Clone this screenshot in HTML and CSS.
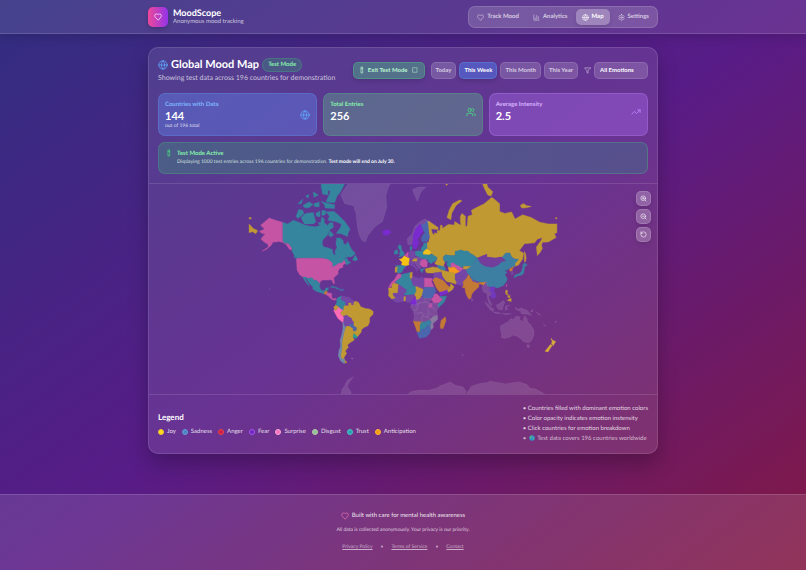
FILE: index.html
```html
<!DOCTYPE html>
<html lang="en">
<head>
<meta charset="utf-8">
<meta name="viewport" content="width=device-width, initial-scale=1">
<title>MoodScope</title>
<link rel="stylesheet" href="styles.css">
</head>
<body>
<svg class="sprite" aria-hidden="true">
  <symbol id="heart" viewBox="0 0 24 24"><path d="M19 14c1.49-1.46 3-3.21 3-5.5A5.5 5.5 0 0 0 16.5 3c-1.76 0-3 .5-4.5 2-1.5-1.5-2.74-2-4.5-2A5.5 5.5 0 0 0 2 8.500c0 2.300 1.500 4.050 3 5.500l7 7Z"/></symbol>
  <symbol id="chart" viewBox="0 0 24 24"><path d="M3 3v18h18M18 17V9M13 17V5M8 17v-3"/></symbol>
  <symbol id="globe" viewBox="0 0 24 24"><circle cx="12" cy="12" r="10"/><path d="M12 2a14.500 14.500 0 0 0 0 20 14.500 14.500 0 0 0 0-20M2 12h20"/></symbol>
  <symbol id="gear" viewBox="0 0 24 24"><path d="M12.220 2h-.44a2 2 0 0 0-2 2v.18a2 2 0 0 1-1 1.730l-.43.25a2 2 0 0 1-2 0l-.15-.08a2 2 0 0 0-2.730.73l-.22.38a2 2 0 0 0 .73 2.730l.15.1a2 2 0 0 1 1 1.720v.51a2 2 0 0 1-1 1.740l-.15.09a2 2 0 0 0-.73 2.730l.22.38a2 2 0 0 0 2.730.73l.15-.08a2 2 0 0 1 2 0l.43.25a2 2 0 0 1 1 1.730V20a2 2 0 0 0 2 2h.44a2 2 0 0 0 2-2v-.18a2 2 0 0 1 1-1.730l.43-.25a2 2 0 0 1 2 0l.15.08a2 2 0 0 0 2.730-.73l.22-.39a2 2 0 0 0-.73-2.730l-.15-.08a2 2 0 0 1-1-1.740v-.5a2 2 0 0 1 1-1.740l.15-.09a2 2 0 0 0 .73-2.730l-.22-.38a2 2 0 0 0-2.730-.73l-.15.08a2 2 0 0 1-2 0l-.43-.25a2 2 0 0 1-1-1.730V4a2 2 0 0 0-2-2z"/><circle cx="12" cy="12" r="3"/></symbol>
  <symbol id="users" viewBox="0 0 24 24"><path d="M16 21v-2a4 4 0 0 0-4-4H6a4 4 0 0 0-4 4v2M22 21v-2a4 4 0 0 0-3-3.870M16 3.130a4 4 0 0 1 0 7.750"/><circle cx="9" cy="7" r="4"/></symbol>
  <symbol id="trend" viewBox="0 0 24 24"><path d="M22 7l-8.500 8.500-5-5L2 17M16 7h6v6"/></symbol>
  <symbol id="filter" viewBox="0 0 24 24"><path d="M22 3H2l8 9.460V19l4 2v-8.540z"/></symbol>
  <symbol id="zoom-in" viewBox="0 0 24 24"><circle cx="11" cy="11" r="8"/><path d="M21 21l-4.350-4.350M11 8v6M8 11h6"/></symbol>
  <symbol id="zoom-out" viewBox="0 0 24 24"><circle cx="11" cy="11" r="8"/><path d="M21 21l-4.350-4.350M8 11h6"/></symbol>
  <symbol id="reset" viewBox="0 0 24 24"><path d="M3 12a9 9 0 1 0 9-9 9.750 9.750 0 0 0-6.740 2.740L3 8M3 3v5h5"/></symbol>
  <symbol id="tube" viewBox="0 0 12 24"><path d="M4 3h4v18H4zM4 8h4"/></symbol>
  <symbol id="box" viewBox="0 0 24 24"><path d="M4 3h16v18H4z"/></symbol>
</svg>

<header class="topbar">
  <div class="container topbar-row">
    <div class="brand">
      <span class="brand-mark"><svg class="icon md"><use href="#heart"/></svg></span>
      <div>
        <div class="brand-name">MoodScope</div>
        <div class="brand-sub">Anonymous mood tracking</div>
      </div>
    </div>
    <nav class="nav">
      <a href="#track"><svg class="icon sm"><use href="#heart"/></svg>Track Mood</a>
      <a href="#analytics"><svg class="icon sm"><use href="#chart"/></svg>Analytics</a>
      <a href="#map" class="active"><svg class="icon sm"><use href="#globe"/></svg>Map</a>
      <a href="#settings"><svg class="icon sm"><use href="#gear"/></svg>Settings</a>
    </nav>
  </div>
</header>

<main class="container main">
  <section class="card">
    <div class="card-head">
      <div class="title-row">
        <div>
          <div class="title">
            <svg class="icon lg blue"><use href="#globe"/></svg>
            <h1>Global Mood Map</h1>
            <span class="badge">Test Mode</span>
          </div>
          <p class="subtitle">Showing test data across 196 countries for demonstration</p>
        </div>
        <div class="controls">
          <button class="btn exit"><svg class="icon tube"><use href="#tube"/></svg>Exit Test Mode<svg class="icon xs"><use href="#box"/></svg></button>
          <div class="periods">
            <button class="btn">Today</button>
            <button class="btn selected">This Week</button>
            <button class="btn">This Month</button>
            <button class="btn">This Year</button>
          </div>
          <div class="filter">
            <label for="emotion" aria-label="Emotion"><svg class="icon sm"><use href="#filter"/></svg></label>
            <select id="emotion"><option>All Emotions</option></select>
          </div>
        </div>
      </div>

      <div class="stats">
        <div class="stat stat-blue">
          <div><div class="stat-label">Countries with Data</div><div class="stat-value">144</div><div class="stat-note">out of 196 total</div></div>
          <svg class="icon lg"><use href="#globe"/></svg>
        </div>
        <div class="stat stat-green">
          <div><div class="stat-label">Total Entries</div><div class="stat-value">256</div></div>
          <svg class="icon lg"><use href="#users"/></svg>
        </div>
        <div class="stat stat-purple">
          <div><div class="stat-label">Average Intensity</div><div class="stat-value">2.5</div></div>
          <svg class="icon lg"><use href="#trend"/></svg>
        </div>
      </div>

      <div class="notice">
        <svg class="icon tube"><use href="#tube"/></svg>
        <div>
          <div class="notice-title">Test Mode Active</div>
          <div class="notice-text">Displaying 1000 test entries across 196 countries for demonstration. <strong>Test mode will end on July 30.</strong></div>
        </div>
      </div>
    </div>

    <div class="map">
      <svg id="world" viewBox="0 0 508 210" role="img" aria-label="World map of moods"></svg>
      <div class="map-tools">
        <button aria-label="Zoom in"><svg class="icon sm"><use href="#zoom-in"/></svg></button>
        <button aria-label="Zoom out"><svg class="icon sm"><use href="#zoom-out"/></svg></button>
        <button aria-label="Reset"><svg class="icon sm"><use href="#reset"/></svg></button>
      </div>
    </div>

    <div class="legend">
      <div>
        <h2>Legend</h2>
        <ul class="keys">
          <li><i class="dot joy"></i>Joy</li>
          <li><i class="dot sadness"></i>Sadness</li>
          <li><i class="dot anger"></i>Anger</li>
          <li><i class="dot fear"></i>Fear</li>
          <li><i class="dot surprise"></i>Surprise</li>
          <li><i class="dot disgust"></i>Disgust</li>
          <li><i class="dot trust"></i>Trust</li>
          <li><i class="dot anticipation"></i>Anticipation</li>
        </ul>
      </div>
      <ul class="hints">
        <li>• Countries filled with dominant emotion colors</li>
        <li>• Color opacity indicates emotion instensity</li>
        <li>• Click countries for emotion breakdown</li>
        <li class="dim">•<svg class="earth" viewBox="0 0 12 12"><circle cx="6" cy="6" r="5.500" fill="#2f8fd0"/><path d="M2 3l3-2 2 1-1 3-2 1-1 3-2-3zM8 5l3 0-1 4-2 1z" fill="#4fb08a"/></svg>Test data covers 196 countries worldwide</li>
      </ul>
    </div>
  </section>
</main>

<footer class="footer">
  <p class="built"><svg class="icon md pink"><use href="#heart"/></svg>Built with care for mental health awareness</p>
  <p class="privacy">All data is collected anonymously. Your privacy is our priority.</p>
  <div class="links"><a href="#privacy">Privacy Policy</a><span>•</span><a href="#terms">Terms of Service</a><span>•</span><a href="#contact">Contact</a></div>
</footer>
<script src="map.js"></script>
</body>
</html>
```
FILE: styles.css
```css
* { box-sizing: border-box; }

body {
  margin: 0;
  min-height: 100vh;
  display: flex;
  flex-direction: column;
  font-family: Lato, "Open Sans", sans-serif;
  font-size: 6px;
  line-height: 8px;
  text-rendering: geometricPrecision;
  color: #fff;
  background: linear-gradient(to bottom right, #312e81, #581c87, #831843);
}

h1, h2, p, ul { margin: 0; padding: 0; }
ul { list-style: none; }
a { color: inherit; text-decoration: none; }
button, select { font: inherit; color: inherit; margin: 0; }

.sprite { display: none; }

.icon {
  flex: none;
  fill: none;
  stroke: currentColor;
  stroke-width: 2;
  stroke-linecap: round;
  stroke-linejoin: round;
}
.icon.xs { width: 6px; height: 6px; }
.icon.sm { width: 7px; height: 7px; }
.icon.md { width: 8px; height: 8px; }
.icon.lg { width: 10px; height: 10px; }
.icon.tube { width: 4px; height: 8px; }
.blue { color: #60a5fa; }
.pink { color: #f472b6; }

.container {
  width: 100%;
  max-width: 510px;
  margin: 0 auto;
}

.topbar {
  background: rgba(255, 255, 255, 0.1);
  border-bottom: 1px solid rgba(255, 255, 255, 0.14);
  box-shadow: 0 3px 10px rgba(0, 0, 0, 0.15);
}
.topbar-row {
  display: flex;
  align-items: center;
  justify-content: space-between;
  padding: 6px 0 5px;
}
.brand { display: flex; align-items: center; gap: 5px; }
.brand-mark {
  display: grid;
  place-items: center;
  width: 20px;
  height: 20px;
  border-radius: 5px;
  background: linear-gradient(to right, #ec4899, #9333ea);
  box-shadow: 0 2px 5px rgba(0, 0, 0, 0.2);
}
.brand-name { font-size: 9px; line-height: 10px; font-weight: 700; }
.brand-sub { color: rgba(255, 255, 255, 0.7); }

.nav {
  display: flex;
  padding: 2px;
  gap: 2px;
  border: 1px solid rgba(255, 255, 255, 0.14);
  border-radius: 7px;
  background: rgba(255, 255, 255, 0.16);
}
.nav a {
  display: flex;
  align-items: center;
  gap: 3px;
  padding: 4px 6px;
  border-radius: 5px;
  font-weight: 700;
  color: rgba(255, 255, 255, 0.7);
}
.nav .active {
  color: #fff;
  background: rgba(255, 255, 255, 0.28);
  box-shadow: 0 2px 4px rgba(0, 0, 0, 0.1);
}

.main { flex: 1; padding: 13px 0 40px; }

.card {
  overflow: hidden;
  border: 1px solid rgba(255, 255, 255, 0.12);
  border-radius: 10px;
  background: rgba(255, 255, 255, 0.1);
  box-shadow: 0 10px 20px rgba(0, 0, 0, 0.25);
}
.card-head {
  padding: 9px;
  border-bottom: 1px solid rgba(255, 255, 255, 0.12);
}
.title-row {
  display: flex;
  align-items: center;
  justify-content: space-between;
  margin-bottom: 10px;
}
.title { display: flex; align-items: center; gap: 3px; }
h1 { font-size: 11px; line-height: 16px; font-weight: 700; }
.badge {
  padding: 2px 5px;
  border: 1px solid rgba(74, 222, 128, 0.2);
  border-radius: 7px;
  background: rgba(34, 197, 94, 0.22);
  color: #86efac;
  font-weight: 700;
}
.subtitle { font-size: 7px; line-height: 10px; color: rgba(255, 255, 255, 0.7); }

.controls { display: flex; align-items: center; gap: 6px; }
.periods { display: flex; gap: 3px; }
.btn {
  display: flex;
  align-items: center;
  padding: 3px 4px;
  height: 17px;
  border: 1px solid rgba(255, 255, 255, 0.12);
  border-radius: 5px;
  background: rgba(255, 255, 255, 0.16);
  color: rgba(255, 255, 255, 0.7);
  font-weight: 700;
  white-space: nowrap;
}
.btn.selected {
  color: #fff;
  border-color: rgba(96, 165, 250, 0.3);
  background: rgba(80, 110, 220, 0.6);
  box-shadow: 0 2px 4px rgba(0, 0, 0, 0.15);
}
.btn.exit {
  gap: 4px;
  padding: 3px 6px;
  color: #bbf7d0;
  border-color: rgba(74, 222, 128, 0.3);
  background: rgba(74, 190, 130, 0.42);
  box-shadow: 0 2px 4px rgba(0, 0, 0, 0.15);
}
.filter { display: flex; align-items: center; gap: 3px; color: rgba(255, 255, 255, 0.7); }
.filter label { display: flex; }
.filter select {
  appearance: none;
  width: 54px;
  height: 17px;
  padding: 0 5px;
  border: 1px solid rgba(255, 255, 255, 0.12);
  border-radius: 5px;
  background: rgba(255, 255, 255, 0.16);
  color: #fff;
  font-weight: 700;
}

.stats {
  display: grid;
  grid-template-columns: repeat(3, 1fr);
  gap: 6px;
  margin-bottom: 6px;
}
.stat {
  display: flex;
  align-items: center;
  justify-content: space-between;
  min-height: 43px;
  padding: 5px 6px;
  border: 1px solid;
  border-radius: 7px;
}
.stat > div { align-self: flex-start; }
.stat-label { font-weight: 700; line-height: 11px; }
.stat-value { font-size: 11px; line-height: 13px; font-weight: 700; color: #fff; }
.stat-note { font-size: 5px; line-height: 7px; color: rgba(255, 255, 255, 0.8); }
.stat .icon { margin-bottom: 6px; }
.stat-blue { color: #7fb5fc; background: rgba(96, 140, 250, 0.36); border-color: rgba(96, 165, 250, 0.25); }
.stat-blue .icon { color: #60a5fa; margin-bottom: 0; }
.stat-green { color: #86efac; background: rgba(96, 170, 140, 0.42); border-color: rgba(74, 222, 128, 0.2); }
.stat-green .icon { color: #4ade80; }
.stat-purple { color: #d8b4fe; background: rgba(168, 105, 235, 0.4); border-color: rgba(192, 132, 252, 0.3); }
.stat-purple .icon { color: #c084fc; }

.notice {
  display: flex;
  align-items: flex-start;
  gap: 6px;
  padding: 6px 8px;
  border: 1px solid rgba(74, 222, 128, 0.22);
  border-radius: 7px;
  background: linear-gradient(to right, rgba(64, 135, 125, 0.45), rgba(64, 115, 140, 0.45));
}
.notice .icon { color: #4ade80; }
.notice-title { font-weight: 700; line-height: 9px; color: #86efac; }
.notice-text { font-size: 5px; line-height: 9px; color: rgba(230, 255, 240, 0.85); }
.notice strong { color: #fff; }

.map { position: relative; }
.map > svg { display: block; width: 100%; }
.map-tools {
  position: absolute;
  top: 7px;
  right: 6px;
  display: grid;
  gap: 3px;
}
.map-tools button {
  display: grid;
  place-items: center;
  width: 15px;
  height: 15px;
  padding: 0;
  border: 1px solid rgba(255, 255, 255, 0.15);
  border-radius: 5px;
  background: rgba(255, 255, 255, 0.24);
  box-shadow: 0 2px 4px rgba(0, 0, 0, 0.12);
}

.legend {
  display: flex;
  align-items: center;
  justify-content: space-between;
  padding: 9px;
  border-top: 1px solid rgba(255, 255, 255, 0.12);
}
h2 { font-size: 8px; line-height: 10px; font-weight: 700; margin-bottom: 6px; }
.keys { display: flex; gap: 6px; color: rgba(255, 255, 255, 0.85); }
.keys li { display: flex; align-items: center; gap: 3px; }
.dot { width: 6px; height: 6px; border: 1px solid; border-radius: 50%; }
.joy { background: #ffd91f; border-color: #e8c52c; }
.sadness { background: #4b84c4; border-color: #6b9bd2; }
.anger { background: #c81e4b; border-color: #ef4444; }
.fear { background: #6d28b8; border-color: #a855f7; }
.surprise { background: #f472c0; border-color: #f9a8d4; }
.disgust { background: #98bd98; border-color: #b5d0a5; }
.trust { background: #2ba3b4; border-color: #4cc2c4; }
.anticipation { background: #f59e0b; border-color: #ffb53a; }
.hints { color: rgba(255, 255, 255, 0.8); line-height: 10px; }
.hints .dim { color: rgba(255, 255, 255, 0.65); }
.earth { width: 6px; height: 6px; margin: 0 2px 0 3px; vertical-align: -1px; }

.footer {
  padding: 16px 0 18px;
  border-top: 1px solid rgba(255, 255, 255, 0.14);
  background: rgba(255, 255, 255, 0.12);
  text-align: center;
}
.built {
  display: flex;
  justify-content: center;
  align-items: center;
  gap: 3px;
  line-height: 10px;
  color: rgba(255, 255, 255, 0.9);
}
.privacy { margin: 6px 0 9px; font-size: 5px; line-height: 7px; color: rgba(255, 255, 255, 0.75); }
.links { display: flex; justify-content: center; gap: 8px; font-size: 5px; line-height: 9px; color: rgba(255, 255, 255, 0.6); }
.links a { text-decoration: underline; }
```
FILE: map.js
```js
// Country outlines as "lon,lat" rings, drawn with a Mercator projection.
const R = 49, CX = 254, EQUATOR = 122.5;
const NONE = "rgba(255,255,255,0.12)";
const GOLD = "#c19933", TEAL = "#36859f", PINK = "#c654a4", BLUE = "#4a67ae";
const VIOLET = "#7a2bd0", ORANGE = "#c37a35", MUTED = "#7546a6", STEEL = "#3d7fa2";

const countries = [
  // Russia
  [GOLD, "28,70 31,70 33,69.5 41,67.5 41,66.5 35,66.7 33,66.7 34.5,64.5 37,64 37,65 40,64.6 40,66 43,66 44,68.5 46,68.3 46,67 53,68.8 60,68.5 60.5,70 65,69 68,68.5 67,70 67,72 69,73 73,72 73,68 75,68 76,72 81,72.5 80,74 87,75 95,76 104,77.7 108,77 113,76 113,73.6 119,73 127,73.5 131,71 140,72.5 150,71.5 160,69.7 170,69 180,69 180,65 177,64.5 179,62.5 170,60 163,59.8 162,58 163,56 160,53 157,51 156,57 161,60.5 163,62.5 157,61.5 154,59.5 142,59 136,54.5 141,53 140,48.5 135,43.5 131,42.6 131,45 135,48.3 130.5,48.5 127,50 125,53 120,53 118,49.7 115,50 108,49.3 98,50 98,52 92,50.7 87,49.2 83,51 77,53.3 76,54.2 71,54.2 68,55 61,54 61,51 55,51 50,51.6 47,50 47,48 49,46 47.5,43 48.5,42 40,43.5 37,45 39,47 40,49.5 35.5,50.4 34,52 31,53 31,55.5 28,56 28,59.5 30,60 31,62.5 30,65 29,68"],
  [GOLD, "51.5,71.5 56,70.7 57,73 62,75.5 69,76.8 66,77 58,76 54,74"],
  [GOLD, "91,81.5 97,81.3 99,80 105,79 103,78 99,78.3 95,79.8"],
  [GOLD, "48,81 54,81 51,80.3"],
  [GOLD, "137,75.5 141,76.1 144,75.5 150,75.2 144,74.8 139,74.7"],
  [GOLD, "178.5,71.5 180,71.5 180,71 178.5,71"],
  [GOLD, "142,54 143.5,52 144,49 143,46 142,46.5 142,50"],
  [GOLD, "-180,69 -175,67 -170,66 -172,64.5 -176,65.5 -180,65"],
  [GOLD, "-180,71.5 -177.5,71.5 -177.5,71 -180,71"],
  // Canada
  [TEAL, "-141,69.7 -135,69 -128,70.5 -122,69.7 -115,68.5 -108,68 -102,67.8 -97,68.3 -95,71.8 -92,71 -92,69.5 -88,68.3 -86,69.5 -82,69.5 -81.5,67.5 -86,66.3 -88,64 -94,61 -94.5,58.7 -92.5,57 -88,56.5 -82.5,55.2 -82,53 -80,51.3 -79,52 -79.5,54.5 -77,56.5 -78.5,58.7 -77.5,62.3 -73.5,62.3 -70,61 -69.5,59 -67,58.3 -64.5,60.3 -61.5,57 -60,55.3 -57.5,54 -55.8,52.3 -60,50.2 -66,50 -69,48.5 -65,49 -64.5,47 -61,45.8 -64,44.5 -66,43.5 -67,45 -69,47.4 -71,45.2 -75,45 -79,43 -82.8,42 -82.5,45.3 -84.5,46.5 -88.5,48.2 -95,49 -123,49 -127,51 -130,54.5 -130,56 -134,59 -137.5,59 -141,60.3"],
  [TEAL, "-59,47.8 -55.7,51.5 -53,48 -55.5,46.9"],
  [TEAL, "-90,73.5 -81,73.7 -76,72.5 -68,70 -62,66.8 -64,65 -65,63 -72,64.5 -78,64.7 -73,67.5 -72,69 -79,70 -88,70.5 -86,72"],
  [TEAL, "-117,70 -119,71.5 -114,73 -105,73.3 -102,69.8 -105,69 -115,69"],
  [TEAL, "-125,72 -122,74.3 -117,74 -116,72.8 -123,71.2"],
  [TEAL, "-90,76.5 -80,76.3 -77,78 -73,79 -62,82.5 -90,83 -91,80 -85,79"],
  [TEAL, "-96,76.7 -91,76.3 -80,75.7 -80,74.6 -91,74.7 -92,75.8"],
  [TEAL, "-96,80.5 -90,80.8 -87,80 -88,78.3 -94,78.5"],
  [TEAL, "-117,75.5 -110,76.5 -105,75.8 -110,74.8 -115,74.8"],
  [TEAL, "-95,74 -90,73.8 -91,72.5 -95,72.3"],
  [TEAL, "-102,73 -97,73.8 -97,71.8 -101,72"],
  [TEAL, "-104,76 -98,76.5 -98,75 -104,75.2"],
  [TEAL, "-123,76 -117,77.3 -119,76"],
  [TEAL, "-105,79 -99,78.3 -104,77.7"],
  [TEAL, "-114,78 -110,78.4 -111,77.5"],
  [TEAL, "-86,66 -81,64 -84,62.8 -87,63.6"],
  [TEAL, "-99,69.7 -96,69.3 -98,68.6"],
  [TEAL, "-128,50.7 -125,50 -123.5,48.5 -125.5,48.9"],
  // United States
  [PINK, "-141,69.7 -150,70.6 -156.5,71.3 -163,69.5 -166.5,68.4 -162,66.7 -168,65.6 -164,64.5 -161,64.3 -165,62.5 -166,61.5 -162,59.8 -158,58.7 -157.5,57 -162,55.2 -165,54.3 -160,55.3 -154,58 -152,60 -149,60 -145,60.3 -139.5,59.6 -136,58 -133,55.5 -130.5,55 -130,56 -134,59 -137.5,59 -141,60.5"],
  [PINK, "-124.7,48.4 -123,49 -95,49 -88.5,48.2 -84.5,46.5 -82.5,45.3 -82.8,42 -79,43 -75,45 -71,45.2 -69,47.4 -67,45 -70.5,43.3 -70,41.7 -74,40.5 -76,38 -75.8,35.5 -78.5,33.8 -81,31.7 -80.2,27 -80.5,25.2 -82,27 -83,29.5 -85,29.8 -90,29.5 -94,29.7 -97.2,27.5 -97.2,26 -99.5,27.5 -101.5,29.7 -103,29 -104.8,29.8 -106.5,31.8 -111,31.3 -114.8,32.5 -117,32.5 -120.5,34.5 -123.8,39 -124.2,43"],
  [MUTED, "-157,21.5 -154.8,19.5 -156,19.2"],
  // Central America and the Caribbean
  [TEAL, "-117,32.5 -114.8,32.5 -111,31.3 -106.5,31.8 -104.8,29.8 -103,29 -101.5,29.7 -99.5,27.5 -97.2,26 -97.8,22.5 -96,19.2 -94,18.2 -91,18.7 -90.4,21 -87,21.5 -88,18.4 -91,17.8 -92,14.6 -96,15.8 -101,17.3 -105.5,20 -105.5,22.5 -109.5,26 -113,31 -114.5,31 -111,26 -109.5,23 -112.3,26 -115,29"],
  [ORANGE, "-92,14.6 -91,17.8 -89,17.8 -88.5,15.8 -90,13.8"],
  [PINK, "-90,13.8 -88.5,15.8 -83.2,15 -83.6,11 -82,9 -79,9.4 -77.5,8.5 -80,7.4 -83.5,8.5 -86,11"],
  [TEAL, "-85,22 -82,23.1 -77,21.3 -74.3,20.1 -77.5,19.9 -79,21.5"],
  [BLUE, "-74,19.9 -70,19.8 -68.4,18.5 -74,18.2"],
  // South America
  [GOLD, "-60,5 -60,2 -56,2 -52,4.3 -50,1 -50,0 -44,-2.5 -39,-3 -35,-5.5 -35,-9 -39,-13 -39,-18 -41,-22 -45,-23.5 -48.5,-26 -48.8,-28.5 -53.5,-33.7 -57.5,-30.2 -54,-26 -54.5,-24 -58,-22 -58,-20 -60,-16 -60,-14 -65,-11 -70.5,-11 -73,-9 -73.5,-7 -70,-4.3 -69.5,1 -67,1.5 -64,1.5 -64.5,4"],
  [GOLD, "-66,-22 -62.5,-22 -58,-25 -57.5,-27.3 -54,-26 -57.5,-30.2 -58.4,-34 -57,-36.5 -62,-39 -65,-41 -64,-43 -67.5,-46 -66,-48 -69,-51 -68.5,-52.5 -65.5,-54.7 -68.5,-54.8 -68.5,-52.3 -72,-52 -73,-49.5 -71.5,-44 -71.5,-38 -70,-33 -68.5,-27 -67,-23"],
  ["#718aa8", "-70.3,-18.3 -69,-18 -68,-21 -67,-23 -68.5,-27 -70,-33 -71.5,-38 -71.5,-44 -73,-49.5 -72,-52 -68.5,-52.3 -68.5,-55.5 -73,-53.5 -75.5,-50 -75,-46 -73,-42 -73.5,-37 -71.5,-31 -70.3,-25"],
  ["#ff6bb5", "-81,-4.5 -80,-3.5 -78.5,-4.5 -75.3,-0.2 -73,-2.3 -70,-4.2 -73.5,-7 -73,-9 -70.5,-11 -69,-12.5 -69.5,-17.5 -70.3,-18.3 -76,-14 -79.5,-7.5"],
  [MUTED, "-69.5,-17.5 -69,-12.5 -69.5,-11 -65.3,-10 -65,-11 -60,-14 -60,-16 -58,-17 -58,-20 -62,-20 -62.5,-22 -66,-22 -68,-22.5"],
  [BLUE, "-62.5,-22 -62,-20 -58,-20 -58,-22 -54.5,-24 -55,-27.3 -58.5,-27.3 -58,-25"],
  ["#25a08e", "-57.5,-30.2 -53.5,-33 -54,-34.8 -58.4,-34"],
  [TEAL, "-77.5,8.5 -75.5,10.7 -71.5,12.3 -72.5,8 -70,7 -67.5,6 -67,1.5 -69.5,1 -70,-4.2 -73,-2.3 -75.3,-0.2 -79,1.5 -77.5,4"],
  [MUTED, "-71.5,12 -68,11.5 -63,10.7 -60,8.5 -61,6 -60.5,5 -64.5,4 -64,1.5 -67,1.5 -67.5,6 -70,7 -72.5,8"],
  [MUTED, "-60,8.5 -57,6 -58,2 -60,2 -60.5,5"],
  [GOLD, "-57,6 -54,5.8 -54.5,2.3 -58,2"],
  [GOLD, "-54,5.8 -51.7,4.2 -52.7,2.2 -54.5,2.3"],
  [GOLD, "-80,-3.5 -81,-1 -79,1.5 -75.3,-0.2 -78.5,-4.5"],
  [NONE, "-61,-51.5 -58,-51.5 -59,-52.5"],
  // Greenland, Iceland, Svalbard
  [NONE, "-73,78.3 -68,76 -58,75.5 -55,73 -54,70 -53,67 -51,63.5 -48,61 -44,60 -41,63.5 -37,65.7 -32,68 -24,70 -22,72 -19,75 -20,78 -17,80 -12,81.5 -30,83.5 -60,82 -65,80.5"],
  [VIOLET, "-24,65.5 -22,66.3 -16,66.3 -14,65 -18.5,63.5 -22.5,64"],
  [NONE, "11,79.5 18,80 27,80 21,79 20,78.5 17,76.7 14,78"],
  // Europe
  [NONE, "5,62 5.5,59 8,58 11,59 12,61 12,64 15,67 20,69 25,68.6 29,69 31,70 26,71 20,70 14,68 10,64"],
  [VIOLET, "11,59 12.5,56 14.5,55.5 16.5,57 18.5,60 17,61.5 21.5,64.5 24,66 23.5,68 20,69 15,67 12,64 12,61"],
  [BLUE, "21,69 24,66 25.5,65 21.5,62.5 22,60.3 28,60.3 31,62.5 30,65 29,69.8 27,70 25,68.6"],
  [TEAL, "-5.5,50 1.3,51.2 1.5,52.8 -1.5,55 -2,57.5 -4,58.5 -6,57 -3,54 -4.7,52.5 -3,51.4"],
  [TEAL, "-10,52 -6.3,52.2 -6,54.5 -8,55.3 -10,54"],
  ["#f6c315", "-4.5,48.3 -1.5,48.6 1.5,50.9 4,50 8,49 7,46 7.5,43.8 3,43 -1.7,43.4 -1,46"],
  [TEAL, "-9,43 -1.7,43.4 3.2,42.3 0,39.5 -1,37.5 -5.5,36 -7,37.2 -7,41.8"],
  [GOLD, "-8.8,41.8 -6.5,41.8 -7.3,37.2 -9,37 -9.4,38.8"],
  [PINK, "2,51 5,53.3 7,53.3 6,49.7"],
  [MUTED, "6,51.5 7,53.5 8.5,54.8 14,54 15,51 12.5,50 13,48 7.6,47.6 8,49"],
  [TEAL, "8.2,55 8.3,57 10.5,57.6 10,55"],
  [TEAL, "14,54 19,54.5 23.5,54 23.5,50.5 22.5,49 15,51"],
  ["#f0c01c", "23.5,54 27,56 31,55 32.5,53 31,51.5 24,51.7"],
  [TEAL, "22.5,49 24,51.7 31,51.5 34,52 40,49.5 38,47 35,46 33,44.5 30.5,46.3 28.5,45.5 30,48 25,47.8"],
  [TEAL, "21,56 24,58 24,59.2 28,59.5 28,56 26.5,55.5 23.5,54 21,55.3"],
  [MUTED, "7,44 7,46 12,47 13.5,45.8 12.3,44.5 18,40.3 16,38 15.5,40 10.5,43"],
  [PINK, "20.5,46 22.5,48 27,48 28.5,45.3 28,41.8 22.5,42 20.5,44"],
  [NONE, "13,50 17,50 22.5,49 20.5,46 20.5,42 19.5,40 15,44 13.5,46"],
  [GOLD, "10,47 13,48.6 16.5,48.7 16,46.7"],
  [TEAL, "20,39.7 26,41 24,40 23,38 22.5,36.5 21,38"],
  // Middle East and Central Asia
  [GOLD, "26,40 30,41 35,42 41,41.3 44.5,39.5 44,37.2 36,36.5 30,36.3 27,37"],
  [STEEL, "40,43.5 48.5,42 50,40.3 48.5,38.5 44.5,39.5 41,41.3"],
  [TEAL, "47,50 50,51.6 55,51 61,51 61,54 68,55 71,54.2 76,54.2 77,53.3 83,51 87,49.2 82.5,45.3 80,42.3 71,42.5 68,41.2 62,43.5 58.5,45.5 56,41.3 53,42 51,44.5 53,46.8 49,46"],
  [PINK, "56,45 58.5,45.5 62,43.5 66,42.5 68,41.2 72,40.5 67.5,37.3 64,39 60,42 56,41.3"],
  ["#f59a1c", "53,42 56,41.3 60,42 64,39 66.5,37.5 61,35.5 54,37.3"],
  [GOLD, "71,42.5 80,42.3 74,39.5 70,40"],
  [MUTED, "67.5,37.3 70,40 74,39.5 74.5,37"],
  [GOLD, "44.5,39.5 48.5,38.5 54,37.3 61,36.5 61,31 63,27 61.5,25.2 57,27 51.5,27.8 48.5,30.2 46,33"],
  [MUTED, "42,37 44.5,37 46,33 48.5,30.2 47,29 39,32 41,34.5"],
  [MUTED, "36,36.5 42,37 41,34.5 39,32 35,29.5 35.5,33"],
  [ORANGE, "35,29.5 37,31.5 39,32 47,29 50,26.5 51.5,24.5 55,22 52,19 46.5,17 43,16.5 39,21"],
  [VIOLET, "43,16.5 46.5,17 52,19 53,16.5 45,12.8 43.3,12.8"],
  [GOLD, "52,19 55,22 56,26 59.8,22.5 57.5,19 53,16.5"],
  [MUTED, "61,35.5 66.5,37.5 71,38 74.5,37 70,34 66,30 61,30"],
  [MUTED, "61.5,25.2 63,27 61,30 66,30 70,34 74.5,37 77,35.5 74.5,31.5 70,27.5 71,24.5 67,24"],
  // South and East Asia
  [ORANGE, "71,24.5 70,27.5 74.5,31.5 77,35.5 79,31 81,29.5 88,27 92,27.5 97,28 94,24 92,25 89,26 88.5,22 86.5,20.5 82,16.5 80,13 79.8,10.3 77.5,8.2 75,12 73,17 72.5,21 69,22"],
  [MUTED, "81,29.8 88,27.8 88,26.5 81,28.5"],
  [NONE, "80,9.5 82,7.5 80.5,6"],
  [STEEL, "74,39.5 80,42.3 82.5,45.3 87,49.2 91,45 96,42.7 105,41.6 111,43.5 116,46.7 120,47 116,49.8 120,53 125,53 127,50 130.5,48.5 135,48.3 131,45 131,42.6 126,41.5 121.5,39 118,39 122,37 119,35 122,31 121,28 117,23.5 110,21 108,21.7 102,22 98,24.5 98,28 92,27.5 88,28 81,30 79,32.5 77,35.5 74.5,37"],
  ["#733d9c", "87,49.2 98,52 98,50 108,49.3 115,50 120,47 116,46.7 111,43.5 105,41.6 96,42.7 91,45"],
  [ORANGE, "124.5,40 130,42.5 127.5,39.5 128.3,38.5 125,38"],
  [MUTED, "126.5,38 128.3,38.5 129.5,35.5 126.5,34.5"],
  [STEEL, "130,31.5 130,33.5 131.5,34.7 136,36 138.5,38 140,41.5 140,43.5 142,45.5 145.5,43.5 142.5,42.3 142,40 141,36 139,34.5 134,33.7"],
  [GOLD, "120,18.7 122.3,18.5 121.7,14.5 124.5,13 122,13 120,15"],
  [GOLD, "122,7 126.5,5.7 126.5,9.7 123,8.3"],
  [GOLD, "122,11.5 125.5,12.5 124.5,9.7"],
  [PINK, "120.5,24.5 121.8,25 121,22.3"],
  [NONE, "92.5,21 95,26.5 98,28 98.5,24 101,21 105,16 102,12.5 99.5,11.5 103,4 104,1.5 101,3 99,8 98.5,13 97,16.5 94.5,16"],
  ["#7238bd", "102,22 106,22.5 108,21.5 106,18.5 109,13 109,11.5 105,9 103,11 102,13 105,15 101,18"],
  [NONE, "95.5,5.5 98,4 104,-1.5 106,-3 105.5,-6 102,-4 98,1"],
  [NONE, "105.5,-6.3 112,-7 114.5,-8.5 108,-7.8"],
  [NONE, "116,-8.3 123,-8.3 127,-8.5 120,-9.5"],
  [NONE, "109,1.5 113,3.5 117,7 119,5 117.5,1 116,-4 111,-3"],
  [NONE, "119.5,-5 120,0.5 125,1.5 121,0 122.5,-4 121,-3"],
  [NONE, "131,-1 135,-3.2 138,-1.7 145,-4.3 147,-6.5 150.5,-10.5 146,-9 143,-9 138,-8.2 138,-5.5 133,-4"],
  [NONE, "149,-5.5 152,-3.5 152,-5.5 150,-6.3"],
  [NONE, "155,-6 161,-10 159,-9.5"],
  // Oceania
  [NONE, "114,-22 114,-26 115.5,-31.5 115,-34 118,-35 123.5,-34 129,-31.7 134,-33 138,-35.5 141,-38 147,-39 150,-37.3 153,-32 153.3,-27 149,-20.5 146,-18.5 145,-14.5 142.5,-10.8 141,-13.5 140.5,-17.5 136,-15 136.8,-12 132,-11.3 129,-15 126,-14 122,-18"],
  [NONE, "144.7,-40.8 148.3,-41 147,-43.5 145.5,-43"],
  [NONE, "164,-20 167,-22.3 166,-22.3"],
  [NONE, "177,-18 180,-16.5 178.5,-18.5"],
  ["#d6ab3c", "173,-34.7 175,-36.7 178.5,-37.8 175.5,-41.7 173.5,-39.3 174.5,-38"],
  ["#d6ab3c", "172.7,-40.4 174.3,-41.7 171.5,-44.5 169.5,-46.8 166,-46.2"],
  // Africa
  [PINK, "-6,35.8 -2,35 -1.5,32.5 -8,28.7 -9,27.5 -13,27.7 -10,30"],
  [PINK, "-13,27.7 -9,27.5 -9,26 -12,25.8 -13,23 -17,21 -15,25"],
  [TEAL, "-2,35 8.5,37 8,33 10,29 12,23.5 4,19 -9,27.5 -8,28.7 -1.5,32.5"],
  [GOLD, "8.5,37 11,37 10.5,34 11.5,33 9.5,30 8,33"],
  [MUTED, "11.5,33 15,32.3 20,31 20,32.7 25,31.7 25,20 24,19.5 15,23 12,23.5 10,29 9.5,30"],
  [PINK, "25,31.6 34,31.2 34.5,29 33,28.5 36.5,22 25,22"],
  [GOLD, "-17,21 -13,21.2 -13,23 -12,25.8 -9,26 -5,25 -6,15.5 -12,15 -16.5,16.5"],
  [MUTED, "-5,25 4,19 4,16 -4,13 -11,12.5 -12,15 -6,15.5"],
  [TEAL, "4,19 12,23.5 15,23 15.5,17 13.5,14 4,13 0.5,14.5 4,16"],
  [GOLD, "15,23 24,19.5 22.5,13 19,9 15,8 13.5,14 15.5,17"],
  [BLUE, "25,22 36.5,22 38.5,18 36,12.5 33,10 24,10 22.5,13 24,19.5 25,20"],
  [NONE, "24,10 33,10 33,8 31,3.5 27,5"],
  [PINK, "36.5,14.5 40,14.5 43,11 47,8 42,4 36,4.5 33,8 36,12"],
  [TEAL, "43,11.5 51,12 48,5 41.5,-1.5 41,3 42,4 47,8"],
  [GOLD, "-16.5,16.5 -12,15 -11.5,12.5 -8,10 -10,8 -13,8.5 -17,12.5"],
  [MUTED, "-13,8.5 -8,10 -11,12.5 -4,13 -3,5.2 -7.5,4.4"],
  [MUTED, "-4,13 0.5,14.5 3,12 2.7,6.3 -3,5.2"],
  [MUTED, "3,6.5 4,13 13.5,13.5 12,8 8.5,4.7 5.5,4.5"],
  [GOLD, "1,6.3 1,11 3,12 2.7,6.3"],
  [VIOLET, "8.5,4.7 12,8 14.5,12 15,8 16,2 10,2.3"],
  [NONE, "15,8 19,9 22.5,11 27,5 18,4 16,2"],
  [NONE, "12,-5 16,-4 18,4 27,5 31,3.5 29.5,-1 29.3,-5 31,-8.5 28.5,-9 29.5,-13 24,-11 22,-7 17,-8"],
  [NONE, "12,-6 17,-8 22,-7 24,-11 22,-13 22,-17 12,-17 13.5,-12"],
  [NONE, "9.5,2.3 16,2 18,4 16,-4 12,-5 9,-1"],
  [NONE, "34,-1 34,4.5 36,4.5 41,3 41.5,-1.5 39.3,-4.7"],
  [NONE, "30.5,-1 34,-1 39.3,-4.7 40.3,-10.5 35,-11.5 31,-8.5 29.5,-5"],
  ["#b055a8", "29.5,-1 31,3.5 34,4 34,-1"],
  [NONE, "22,-13 24,-11 29.5,-13 28.5,-9 33,-9.5 33,-14 25,-17.7 22,-17"],
  ["#8a7aa0", "40.3,-10.5 40.5,-15 35,-19.5 35.5,-24 32.5,-26.5 31.5,-23 33,-17 30.5,-15.5 33,-14 35,-11.5"],
  [ORANGE, "12,-17 24,-17.8 20,-22 20,-28.5 16.5,-28.5 14.5,-23"],
  [TEAL, "20,-22 21,-18.3 25,-17.8 29,-22 25,-25.5 20,-27"],
  [STEEL, "25,-17.8 30.5,-15.7 33,-18 31.5,-22.3 29,-22"],
  [BLUE, "16.5,-28.5 20,-28.5 20,-27 25,-25.5 29,-22 31.5,-22.3 32.5,-26.5 31,-30 27,-33.7 20,-34.8 18,-33"],
  [ORANGE, "49.3,-12 50.3,-16 47,-25 44,-25 43.5,-22 44.5,-16"],
  // Antarctica and southern islands
  [NONE, "-73,-72 -71,-69 -68,-67.5 -65,-65 -58,-63.2 -63,-66 -65,-68 -61,-70 -60,-72"],
  [NONE, "1,-72 10,-70 18,-69.5 30,-69.5 40,-68.5 44,-67.5 48,-67 55,-65.8 62,-67.5 70,-68 74,-70 71,-72"],
  [NONE, "72,-72 80,-67.8 90,-66.5 100,-66 101,-65.3 110,-66 120,-66.7 130,-66 136,-65.8 145,-67 148,-68.5 155,-69 163,-70.5 173,-72"],
  [NONE, "69,-48.7 70.5,-49.2 69,-49.7"]
];

const svg = document.getElementById("world");
for (const [fill, ring] of countries) {
  const points = ring.split(" ").map(pair => {
    const [lon, lat] = pair.split(",").map(Number);
    const x = CX + R * lon * Math.PI / 180;
    const y = EQUATOR - R * Math.log(Math.tan(Math.PI / 4 + lat * Math.PI / 360));
    return x.toFixed(1) + "," + y.toFixed(1);
  });
  const shape = document.createElementNS("http://www.w3.org/2000/svg", "polygon");
  shape.setAttribute("points", points.join(" "));
  shape.setAttribute("fill", fill);
  shape.setAttribute("stroke", fill === NONE ? "rgba(255,255,255,0.15)" : fill);
  shape.setAttribute("stroke-width", "0.4");
  shape.setAttribute("stroke-linejoin", "round");
  svg.appendChild(shape);
}
```
